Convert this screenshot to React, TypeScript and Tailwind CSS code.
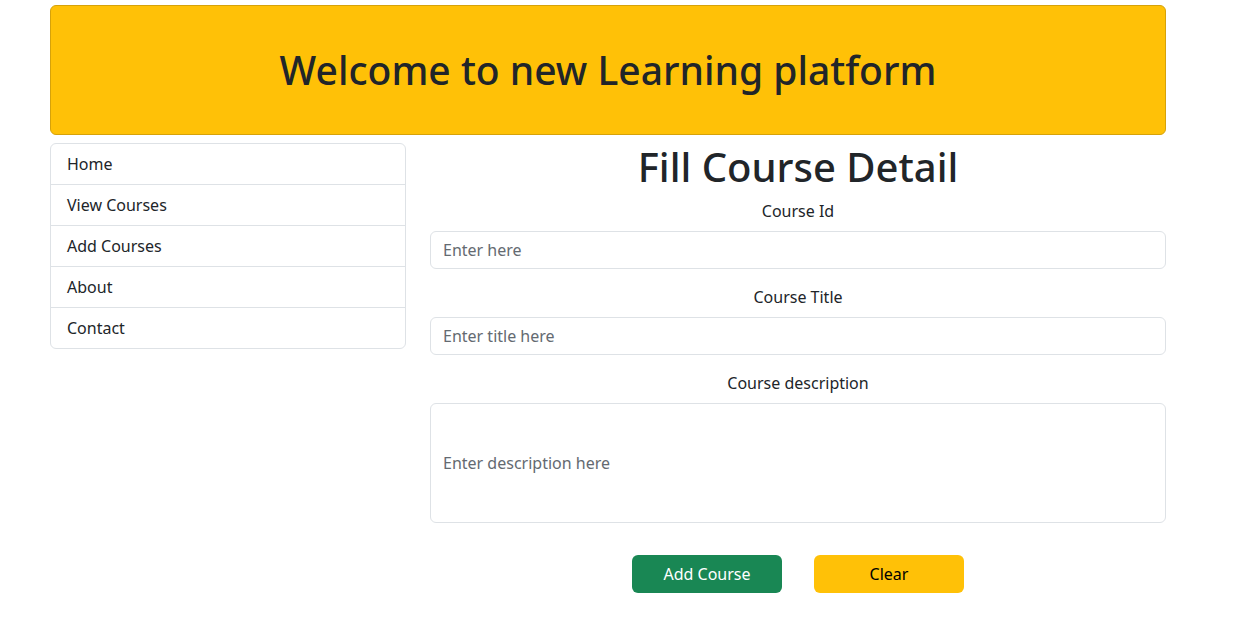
import React from 'react';

const navItems = ['Home', 'View Courses', 'Add Courses', 'About', 'Contact'];

function Field({ label, placeholder, tall }: { label: string; placeholder: string; tall?: boolean }) {
	return (
		<div className="mb-4">
			<label className="block text-center text-[16px] leading-6 mb-2">{label}</label>
			<input
				type="text"
				placeholder={placeholder}
				className={`block w-full border border-[#dee2e6] rounded-[6px] px-3 text-[16px] text-[#212529] placeholder:text-[#646a71] outline-none ${tall ? 'h-[120px]' : 'h-[38px]'}`}
			/>
		</div>
	);
}

export default function App() {
	return (
		<div className="min-h-screen bg-white text-[#212529]" style={{ fontFamily: '"Noto Sans", sans-serif' }}>
			<div className="w-[1116px] ml-[50px] pt-[5px]">
				{/* Header */}
				<div className="bg-[#ffc107] border border-[#d6a20a] rounded-[6px] py-10">
					<h1 className="text-center text-[39px] leading-[48px] font-medium">Welcome to new Learning platform</h1>
				</div>

				{/* Main */}
				<div className="flex gap-6 mt-2">
					{/* Sidebar */}
					<div className="w-[356px] shrink-0">
						<div className="border border-[#dee2e6] rounded-[6px]">
							{navItems.map((item, i) => (
								<a
									key={item}
									href="#"
									className={`block px-4 py-2 text-[16px] leading-6 ${i > 0 ? 'border-t border-[#dee2e6]' : ''}`}
								>
									{item}
								</a>
							))}
						</div>
					</div>

					{/* Form */}
					<div className="flex-1">
						<h1 className="text-center text-[40px] leading-[48px] font-medium mb-2">Fill Course Detail</h1>
						<Field label="Course Id" placeholder="Enter here" />
						<Field label="Course Title" placeholder="Enter title here" />
						<Field label="Course description" placeholder="Enter description here" tall />
						<div className="flex justify-center gap-8 mt-8">
							<button className="w-[150px] h-[38px] rounded-[6px] bg-[#198754] text-white text-[16px]">Add Course</button>
							<button className="w-[150px] h-[38px] rounded-[6px] bg-[#ffc107] text-black text-[16px]">Clear</button>
						</div>
					</div>
				</div>
			</div>
		</div>
	);
}
